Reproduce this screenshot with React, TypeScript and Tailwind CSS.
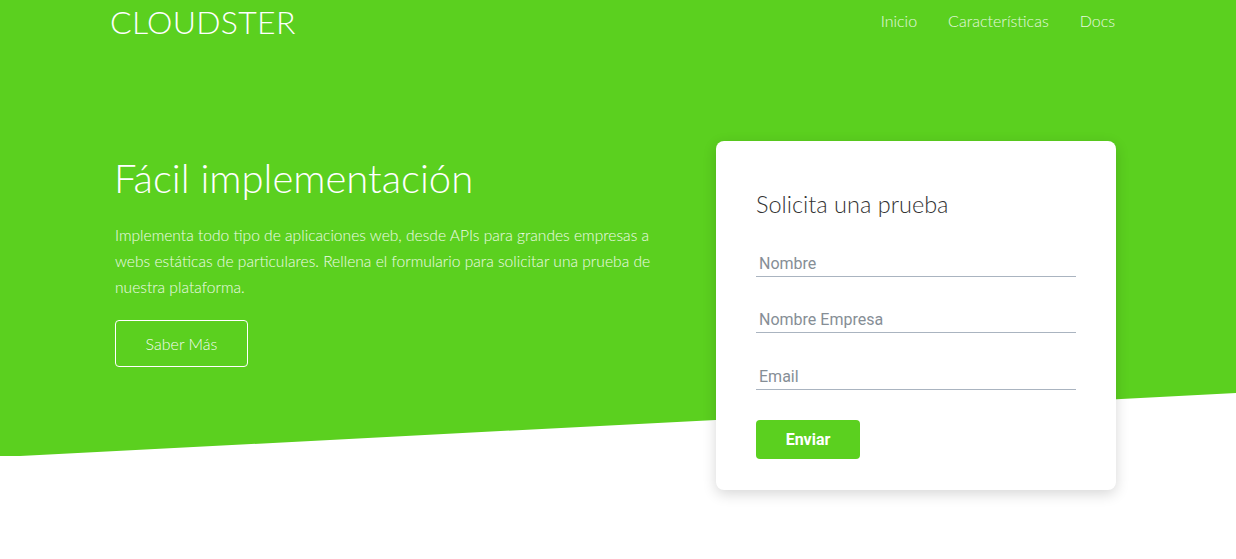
import React from "react";

const links = [
  { label: "Inicio", href: "#inicio" },
  { label: "Características", href: "#caracteristicas" },
  { label: "Docs", href: "#docs" },
];

const fields = ["Nombre", "Nombre Empresa", "Email"];

const App = () => {
  return (
    <div className="relative w-full min-h-[559px] bg-white font-['Lato',sans-serif] overflow-hidden">
      {/* green slanted background */}
      <div className="absolute inset-x-0 top-0 h-[456px] bg-[#5bd01f] [clip-path:polygon(0_0,100%_0,100%_393px,20px_456px,0_456px)]" />

      <div className="relative w-[1006px] mx-auto">
        <header className="flex items-center justify-between h-[43px]">
          <a href="#" className="-ml-[5px] text-[32px] font-light text-white tracking-[0.3px] leading-none">
            CLOUDSTER
          </a>
          <nav className="flex flex-row gap-[31px] pr-[6px] -mt-[2px]">
            {links.map((link, index) => (
              <a
                key={index}
                href={link.href}
                className="text-[16px] font-light text-white/85 leading-none"
              >
                {link.label}
              </a>
            ))}
          </nav>
        </header>

        <section className="flex flex-row items-start justify-between mt-[98px] pr-[5px]">
          <div className="pt-[13px] w-[560px]">
            <h1 className="-ml-[1px] text-[40px] font-light text-white leading-[48px]">
              Fácil implementación
            </h1>
            <p className="mt-[20px] text-[15.6px] font-light text-white/90 leading-[26px]">
              Implementa todo tipo de aplicaciones web, desde APIs para grandes empresas a webs estáticas de particulares. Rellena el formulario para solicitar una prueba de nuestra plataforma.
            </p>
            <button
              type="button"
              className="mt-[20px] w-[133px] h-[47px] border border-white rounded-[4px] text-[16px] font-light text-white/95"
            >
              Saber Más
            </button>
          </div>

          <div className="w-[400px] bg-white rounded-[8px] shadow-[0_4px_14px_rgba(0,0,0,0.16)] px-10 pt-[48px] pb-[31px]">
            <h2 className="text-[23.5px] font-light text-[#333] leading-[30px]">
              Solicita una prueba
            </h2>
            <form className="flex flex-col">
              {fields.map((f, i) => (
                <input
                  key={i}
                  type="text"
                  placeholder={f}
                  className={`w-[320px] h-[34px] pt-[7px] px-[3px] border-b border-[#aab4c0] font-['Roboto',sans-serif] text-[16px] text-[#555] placeholder:text-[#868e96] outline-none ${
                    i === 0 ? "mt-[24px]" : i === 1 ? "mt-[22px]" : "mt-[23px]"
                  }`}
                />
              ))}
              <button
                type="button"
                className="mt-[30px] w-[104px] h-[39px] rounded-[4px] bg-[#5bd01f] font-['Roboto',sans-serif] font-bold text-[16px] text-white"
              >
                Enviar
              </button>
            </form>
          </div>
        </section>
      </div>
    </div>
  );
};

export default App;
